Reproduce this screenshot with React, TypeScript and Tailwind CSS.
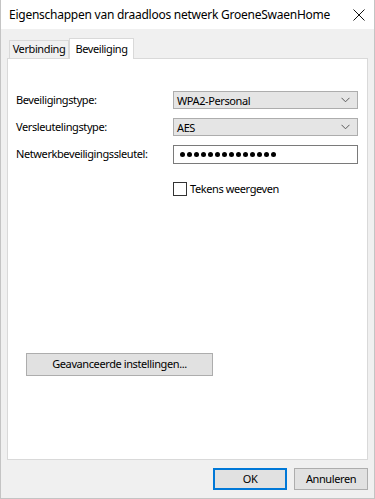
import React from "react";

const font = { fontFamily: '"Noto Sans", "Open Sans", sans-serif' };

function Chevron() {
  return (
    <svg width="9" height="6" viewBox="0 0 9 6" className="shrink-0">
      <path d="M0.5 0.8 L4.5 4.8 L8.5 0.8" fill="none" stroke="#5a5a5a" strokeWidth="1" />
    </svg>
  );
}

function Combo({ value }: { value: string }) {
  return (
    <div className="flex h-[18px] w-[185px] items-center justify-between border border-[#adadad] bg-[#e5e5e5] pl-[3px] pr-[7px] text-[11px] text-black">
      <span className="leading-none">{value}</span>
      <Chevron />
    </div>
  );
}

export default function App() {
  return (
    <div
      className="flex h-[499px] w-[375px] flex-col overflow-hidden border-x border-b border-[#c4c4c4] bg-[#f0f0f0] tracking-[-0.4px] text-black"
      style={font}
    >
      {/* title bar */}
      <div className="flex h-[29px] shrink-0 items-center justify-between bg-white pl-[8px] pr-[9px]">
        <span className="whitespace-nowrap text-[12px] leading-none tracking-[-0.25px] text-black">
          Eigenschappen van draadloos netwerk GroeneSwaenHome
        </span>
        <svg width="12" height="12" viewBox="0 0 12 12">
          <path d="M0.5 0.5 L11.5 11.5 M11.5 0.5 L0.5 11.5" stroke="#111" strokeWidth="1" />
        </svg>
      </div>

      <div className="flex flex-1 flex-col px-[6px] pt-[9px]">
        {/* tabs */}
        <div className="relative z-10 flex items-end pl-[2px]">
          <div className="flex h-[18px] w-[60px] items-center justify-center border border-b-0 border-[#d9d9d9] bg-[#f0f0f0] text-[11px]">
            Verbinding
          </div>
          <div className="-mb-px flex h-[21px] w-[65px] items-start justify-center border border-b-0 border-[#d9d9d9] bg-white pt-[2px] text-[11px]">
            Beveiliging
          </div>
        </div>

        {/* panel */}
        <div className="flex h-[402px] flex-col border border-[#d9d9d9] bg-white pl-[8px] pr-[8px] pt-[32px]">
          <div className="grid grid-cols-[157px_185px] items-center gap-y-[9px] text-[11px]">
            <span>Beveiligingstype:</span>
            <Combo value="WPA2-Personal" />
            <span>Versleutelingstype:</span>
            <Combo value="AES" />
            <span>Netwerkbeveiligingssleutel:</span>
            <div className="flex h-[19px] w-[185px] items-center gap-[2px] border border-[#7a7a7a] bg-white pl-[6px]">
              {Array.from({ length: 14 }).map((_, i) => (
                <span key={i} className="h-[5px] w-[5px] rounded-full bg-black" />
              ))}
            </div>
          </div>

          <div className="ml-[157px] mt-[17px] flex items-center gap-[3px] text-[11px]">
            <span className="h-[14px] w-[14px] border border-[#333] bg-white" />
            <span>Tekens weergeven</span>
          </div>

          <button className="ml-[10px] mt-[155px] flex h-[23px] w-[187px] items-center justify-center border border-[#adadad] bg-[#e1e1e1] text-[11px]">
            Geavanceerde instellingen...
          </button>
        </div>

        {/* footer buttons */}
        <div className="flex justify-end gap-[7px] pt-[8px]">
          <button className="flex h-[22px] w-[74px] items-center justify-center border-2 border-[#0078d7] bg-[#e1e1e1] text-[11px]">
            OK
          </button>
          <button className="flex h-[22px] w-[74px] items-center justify-center border border-[#adadad] bg-[#e1e1e1] text-[11px]">
            Annuleren
          </button>
        </div>
      </div>
    </div>
  );
}
